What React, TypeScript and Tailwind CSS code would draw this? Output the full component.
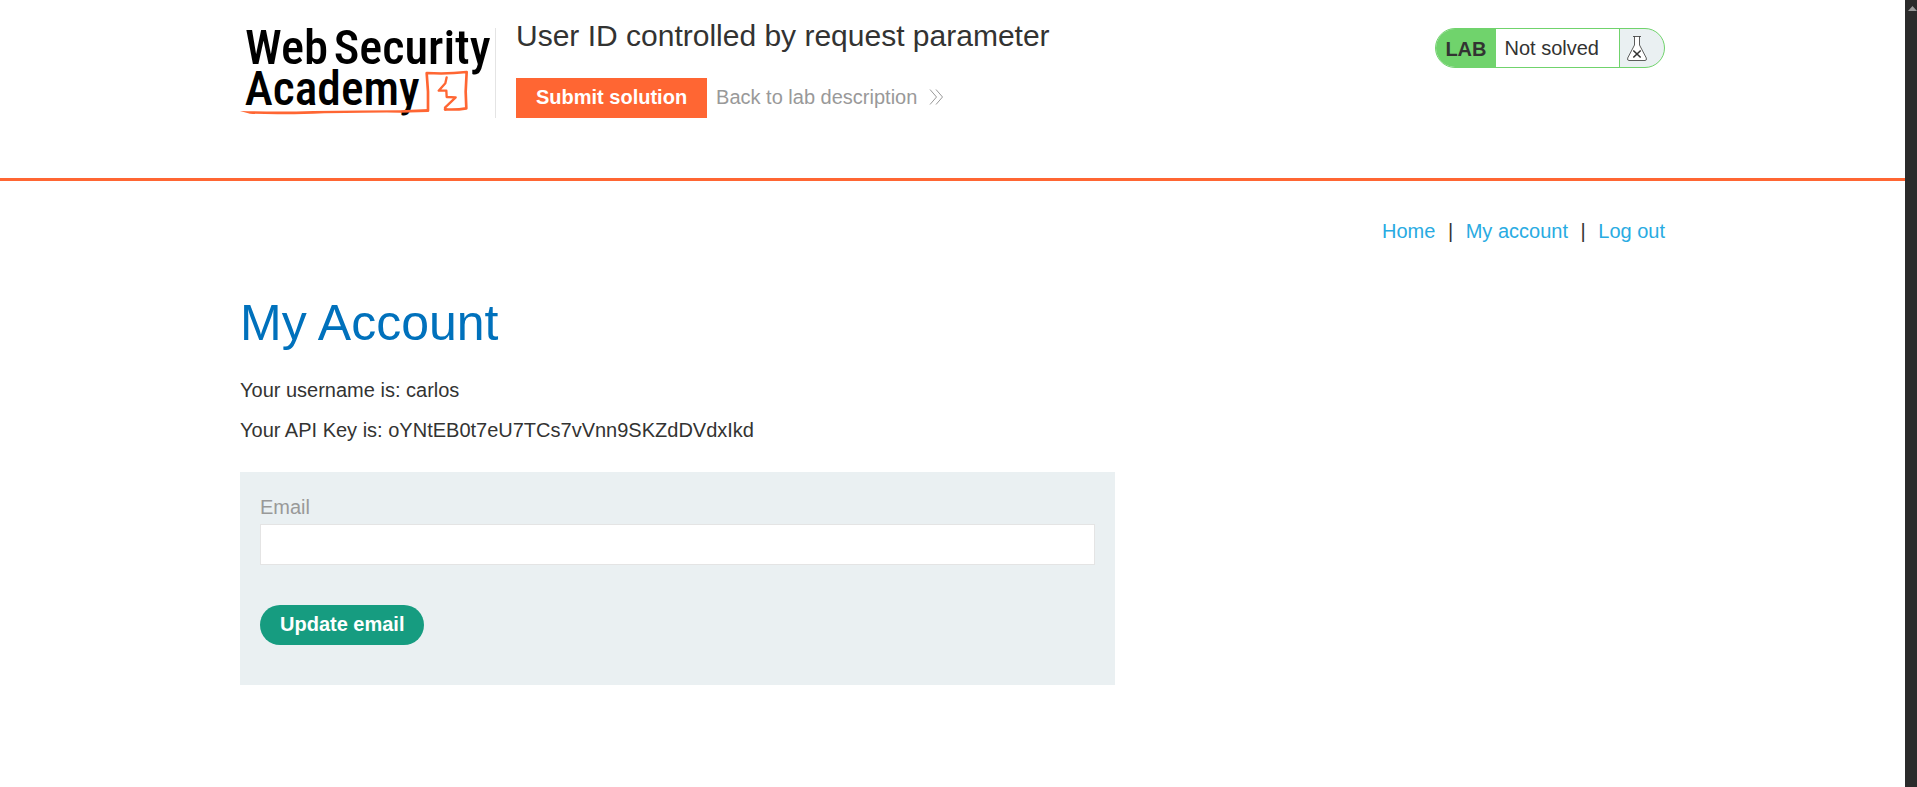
function AcademyLogo() {
  return (
    <svg viewBox="30 39 750 270" className="h-[90px] w-[250px] overflow-visible" role="img" aria-label="Web Security Academy">
      <g fontFamily="'Roboto Condensed', Roboto, sans-serif" fontWeight="500" fill="#000">
        <text x="45" y="147" fontSize="146">Web</text>
        <text x="311" y="147" fontSize="145">Security</text>
        <text x="44" y="270" fontSize="143">Academy</text>
      </g>
      <g fill="none" stroke="#ff6633" strokeLinejoin="round" strokeLinecap="round">
        <path d="M594 287 L594 230 L590 174 Q650 178 710 171 L707 230 L709 280 Q680 285 645 283" strokeWidth="8" />
        <path d="M650 187 L646 205 L626 227 L649 227 L650 246 L677 247 L645 278 L646 284" strokeWidth="7" />
      </g>
      <path d="M30 288 Q150 291 250 288 Q400 286 510 286 L594 282 L594 291 L510 293 Q420 292 250 296 Q130 300 60 296 Z" fill="#ff6633" />
    </svg>
  );
}

function DoubleChevron() {
  return (
    <svg viewBox="0 0 14 16" className="h-4 w-3.5" fill="none" stroke="#999" strokeWidth="1" aria-hidden="true">
      <path d="M1 0.5 L7.5 8 L1 15.5 M7 0.5 L13.5 8 L7 15.5" />
    </svg>
  );
}

function Flask() {
  return (
    <svg viewBox="0 0 20 25" className="h-[25px] w-5" fill="none" stroke="#333332" aria-hidden="true">
      <path d="M6 0.5 H14 M7.5 0.5 V9 L0.7 22 Q0 24.5 2 24.5 H18 Q20 24.5 19.3 22 L12.5 9 V0.5" fill="#fff" strokeWidth="0.8" />
      <path d="M6.3 14.5 L13.7 21.5 M13.7 14.5 L6.3 21.5" strokeWidth="1.6" />
    </svg>
  );
}

function LabStatus() {
  return (
    <div className="flex h-10 overflow-hidden rounded-[20px] border border-[#70d36c] bg-[#eaf0f2] leading-[38px]">
      <strong className="bg-[#70d36c] px-[9px] leading-10 font-bold">LAB</strong>
      <span className="border-r border-[#70d36c] bg-white pr-5 pl-[9px]">Not solved</span>
      <span className="flex w-11 items-center pl-[7px]">
        <Flask />
      </span>
    </div>
  );
}

function Header() {
  return (
    <header className="border-b-[3px] border-[#ff6633] pb-[60px]">
      <div className="mx-60 flex items-start">
        <div className="mt-7 flex w-64 shrink-0 border-r border-[#e4e4e4]">
          <AcademyLogo />
        </div>
        <div className="ml-5 grow">
          <h1 className="mt-4 text-[30px] leading-10">User ID controlled by request parameter</h1>
          <div className="mt-[22px] flex items-start gap-[9px]">
            <button type="button" className="h-10 bg-[#ff6633] px-5 pb-0.5 font-bold text-white">
              Submit solution
            </button>
            <a href="#description" className="flex items-center gap-3 leading-[38px] text-[#999]">
              Back to lab description
              <DoubleChevron />
            </a>
          </div>
        </div>
        <div className="mt-7">
          <LabStatus />
        </div>
      </div>
    </header>
  );
}

function AccountNav() {
  return (
    <nav className="pt-[30px] text-right leading-10 text-[#29abe2]">
      <a href="#home">Home</a> <span className="mx-[7px] text-[#333332]">|</span>{' '}
      <a href="#account">My account</a> <span className="mx-[7px] text-[#333332]">|</span>{' '}
      <a href="#logout">Log out</a>
    </nav>
  );
}

function EmailForm() {
  return (
    <form className="mt-[22px] max-w-[875px] bg-[#eaf0f2] px-5 pt-5 pb-10" onSubmit={(e) => e.preventDefault()}>
      <label htmlFor="email" className="mb-0.5 block leading-[30px] text-[#999]">
        Email
      </label>
      <input
        id="email"
        type="email"
        className="block h-[41px] w-full border border-[#e4e4e4] bg-white px-3 outline-none"
      />
      <button type="submit" className="mt-10 block h-10 rounded-[20px] bg-[#169c80] px-5 pb-0.5 font-bold text-white">
        Update email
      </button>
    </form>
  );
}

function ScrollTrack() {
  return (
    <div className="w-3 shrink-0 bg-[#2b2b2b] pt-1.5 pl-[3px]" aria-hidden="true">
      <svg viewBox="0 0 9 5" className="h-[5px] w-[9px]">
        <path d="M0 5 L4.5 0 L9 5 Z" fill="#999" />
      </svg>
    </div>
  );
}

export default function App() {
  return (
    <div className="flex min-h-screen bg-white font-['Liberation_Sans',Arial,sans-serif] text-[20px] text-[#333332]">
      <div className="min-w-0 grow">
        <Header />
        <main className="mx-60">
          <AccountNav />
          <h2 className="mt-[42px] mb-[17px] text-[50px] leading-[60px] text-[#0071bc]">My Account</h2>
          <p className="leading-10">Your username is: carlos</p>
          <p className="leading-10">Your API Key is: oYNtEB0t7eU7TCs7vVnn9SKZdDVdxIkd</p>
          <EmailForm />
        </main>
      </div>
      <ScrollTrack />
    </div>
  );
}
